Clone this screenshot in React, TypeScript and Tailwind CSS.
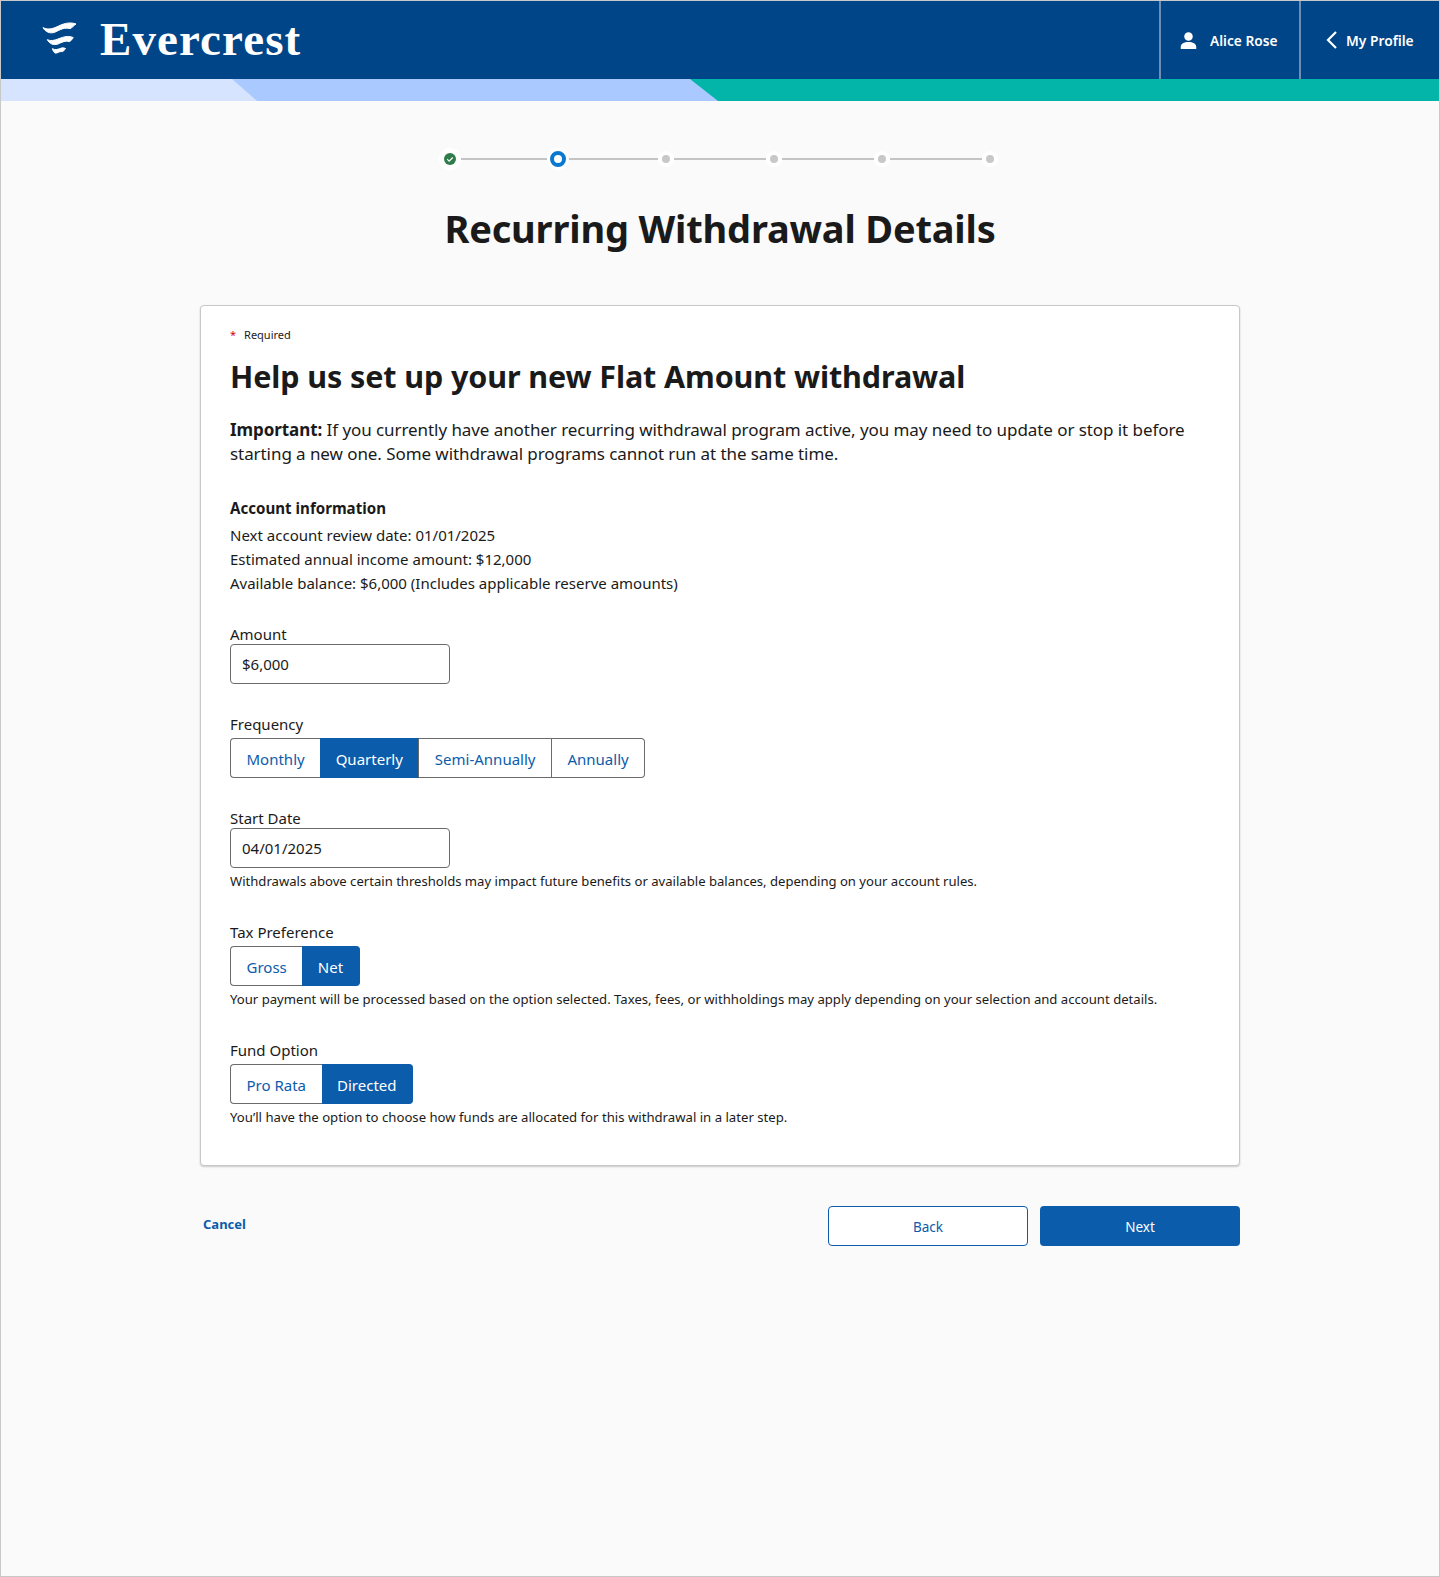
const font = "font-['Noto_Sans','Open_Sans',sans-serif]";

function Step({ state }: { state: 'done' | 'current' | 'todo' }) {
  if (state === 'done') {
    return (
      <div className="w-[22px] h-[22px] rounded-full bg-white flex items-center justify-center shrink-0">
        <svg width="12" height="12" viewBox="0 0 12 12">
          <circle cx="6" cy="6" r="6" fill="#2e7d4a" />
          <path d="M3.200 6.200l1.900 1.900 3.700-3.600" fill="none" stroke="#fff" strokeWidth="1.200" />
        </svg>
      </div>
    );
  }
  if (state === 'current') {
    return (
      <div className="w-[22px] h-[22px] rounded-full bg-white flex items-center justify-center shrink-0">
        <div className="w-[16px] h-[16px] rounded-full border-[4px] border-[#0b78d0] bg-white" />
      </div>
    );
  }
  return (
    <div className="w-[16px] h-[16px] rounded-full bg-white flex items-center justify-center shrink-0">
      <div className="w-[8px] h-[8px] rounded-full bg-[#c8c8c8]" />
    </div>
  );
}

function Line({ width }: { width: string }) {
  return <div className={`h-[2px] ${width} bg-[#c4c4c4]`} />;
}

function Toggle({ options, active }: { options: string[]; active: string }) {
  return (
    <div className="flex h-[40px] w-fit">
      {options.map((o, i) => {
        const isActive = o === active;
        const isFirst = i === 0;
        const isLast = i === options.length - 1;
        const nextActive = options[i + 1] === active;
        return (
          <button
            key={o}
            className={`px-[15.500px] pt-[2px] text-[15px] border-y ${isActive ? 'bg-[#0b5cab] text-white border-y-[#0b5cab]' : 'bg-white text-[#0b5cab] border-y-[#6b6b6b]'} ${isFirst ? 'border-l border-l-[#6b6b6b] rounded-l-[4px]' : ''} ${isLast ? `border-r rounded-r-[4px] ${isActive ? 'border-r-[#0b5cab]' : 'border-r-[#6b6b6b]'}` : ''} ${!isLast && !nextActive ? 'border-r border-r-[#6b6b6b]' : ''}`}
          >
            {o}
          </button>
        );
      })}
    </div>
  );
}

function Field({ label, value }: { label: string; value: string }) {
  return (
    <div>
      <label className="block text-[15px] leading-[19px] text-[#1a1a1a]">{label}</label>
      <input
        readOnly
        value={value}
        className="block w-[220px] h-[40px] px-[11px] text-[15px] text-[#1a1a1a] bg-white border border-[#6b6b6b] rounded-[4px]"
      />
    </div>
  );
}

export default function App() {
  return (
    <div className={`${font} min-h-[1577px] bg-[#fafafa] border border-[#c8c8c8] text-[#1a1a1a]`}>
      <header className="h-[78px] bg-[#004587] flex items-center justify-between">
        <div className="flex items-center pl-[37px]">
          <svg className="-mt-[2px]" width="50" height="48" viewBox="0 0 150 144" fill="#fff" stroke="#fff" strokeWidth="3" strokeLinejoin="round">
            <path d="M15 38C32 46 48 40 62 33C80 24 98 21 114 27C108 31 104 37 96 41C80 36 66 44 52 51C36 58 22 50 15 38Z" />
            <path d="M28 74C42 80 54 74 68 69C82 64 94 62 106 68C102 72 100 77 94 80C82 76 72 82 60 87C46 92 34 86 28 74Z" />
            <path d="M43 101C52 106 60 103 68 100C74 98 78 98 83 101C79 103 78 107 74 110C68 108 62 112 56 114C50 116 46 110 43 101Z" />
          </svg>
          <span className="ml-[12px] mb-[2px] font-['Liberation_Serif',serif] font-bold text-[47px] tracking-[1.100px] leading-none text-white">Evercrest</span>
        </div>
        <div className="flex h-full">
          <div className="w-[140px] border-l-2 border-[#6e8fb5] flex items-center pl-[19px] gap-[13px] text-white">
            <svg width="17" height="17" viewBox="0 0 18 18" fill="#fff">
              <circle cx="9" cy="4.700" r="4.500" />
              <path d="M.8 18v-2.500c0-3 3.500-5 8.200-5s8.200 2 8.200 5V18z" />
            </svg>
            <span className="mt-[2px] text-[13.700px] font-semibold">Alice Rose</span>
          </div>
          <div className="w-[140px] border-l-2 border-[#6e8fb5] flex items-center pl-[25px] gap-[9px] text-white">
            <svg width="11" height="18" viewBox="0 0 11 18" fill="none" stroke="#fff" strokeWidth="2.200">
              <path d="M10 1 2 9l8 8" />
            </svg>
            <span className="mt-[2px] text-[13.800px] font-semibold">My Profile</span>
          </div>
        </div>
      </header>
      <div className="h-[22px] relative overflow-hidden bg-[#03b5a8]">
        <div className="absolute inset-0 bg-[#a9c9ff] [clip-path:polygon(0_0,689px_0,717px_100%,0_100%)]" />
        <div className="absolute inset-0 bg-[#d6e4ff] [clip-path:polygon(0_0,231px_0,256px_100%,0_100%)]" />
      </div>

      <main className="w-[1040px] mx-auto pt-[47px]">
        <div className="flex items-center justify-center pr-[3px]">
          <Step state="done" />
          <Line width="w-[86px]" />
          <Step state="current" />
          <Line width="w-[89px]" />
          <Step state="todo" />
          <Line width="w-[92px]" />
          <Step state="todo" />
          <Line width="w-[92px]" />
          <Step state="todo" />
          <Line width="w-[92px]" />
          <Step state="todo" />
        </div>
        <h1 className="mt-[31px] text-center text-[38px] tracking-[-0.18px] leading-[54px] font-bold">Recurring Withdrawal Details</h1>

        <section className="mt-[50px] h-[861px] bg-white border border-[#c8c8c8] rounded-[4px] shadow-[0_1px_2px_rgba(0,0,0,0.2)] px-[29px] pt-[21px]">
          <div className="text-[11px] leading-[16px]"><span className="text-[#d0021b] mr-[8px]">*</span>Required</div>
          <h2 className="mt-[11px] text-[30.500px] tracking-[-0.11px] leading-[44px] font-bold">Help us set up your new Flat Amount withdrawal</h2>
          <p className="mt-[20px] text-[17px] tracking-[-0.07px] leading-[24px]">
            <b>Important:</b> If you currently have another recurring withdrawal program active, you may need to update or stop it before starting a new one. Some withdrawal programs cannot run at the same time.
          </p>
          <h3 className="mt-[30px] text-[15.100px] leading-[24px] font-bold">Account information</h3>
          <div className="mt-[3px] text-[15px] leading-[24px]">
            <p>Next account review date: 01/01/2025</p>
            <p>Estimated annual income amount: $12,000</p>
            <p>Available balance: $6,000 (Includes applicable reserve amounts)</p>
          </div>
          <div className="mt-[30px]"><Field label="Amount" value="$6,000" /></div>
          <div className="mt-[31px]">
            <div className="text-[15px] leading-[18px] mb-[5px]">Frequency</div>
            <Toggle options={['Monthly', 'Quarterly', 'Semi-Annually', 'Annually']} active="Quarterly" />
          </div>
          <div className="mt-[31px]">
            <Field label="Start Date" value="04/01/2025" />
            <p className="mt-[4px] text-[13.100px] leading-[18px]">Withdrawals above certain thresholds may impact future benefits or available balances, depending on your account rules.</p>
          </div>
          <div className="mt-[33px]">
            <div className="text-[15px] leading-[18px] mb-[5px]">Tax Preference</div>
            <Toggle options={['Gross', 'Net']} active="Net" />
            <p className="mt-[4px] text-[13.140px] leading-[18px]">Your payment will be processed based on the option selected. Taxes, fees, or withholdings may apply depending on your selection and account details.</p>
          </div>
          <div className="mt-[33px]">
            <div className="text-[15px] leading-[18px] mb-[5px]">Fund Option</div>
            <Toggle options={['Pro Rata', 'Directed']} active="Directed" />
            <p className="mt-[4px] text-[13.170px] leading-[18px]">You’ll have the option to choose how funds are allocated for this withdrawal in a later step.</p>
          </div>
        </section>

        <div className="mt-[40px] flex items-start justify-between">
          <a className="ml-[3px] mt-[9px] text-[13px] font-bold text-[#0b5cab]">Cancel</a>
          <div className="flex gap-[12px]">
            <button className="w-[200px] h-[40px] pt-[2px] bg-white border border-[#0b5cab] rounded-[4px] text-[13.500px] text-[#0b5cab]">Back</button>
            <button className="w-[200px] h-[40px] pt-[2px] bg-[#0b5cab] rounded-[4px] text-[13.500px] text-white">Next</button>
          </div>
        </div>
      </main>
    </div>
  );
}
